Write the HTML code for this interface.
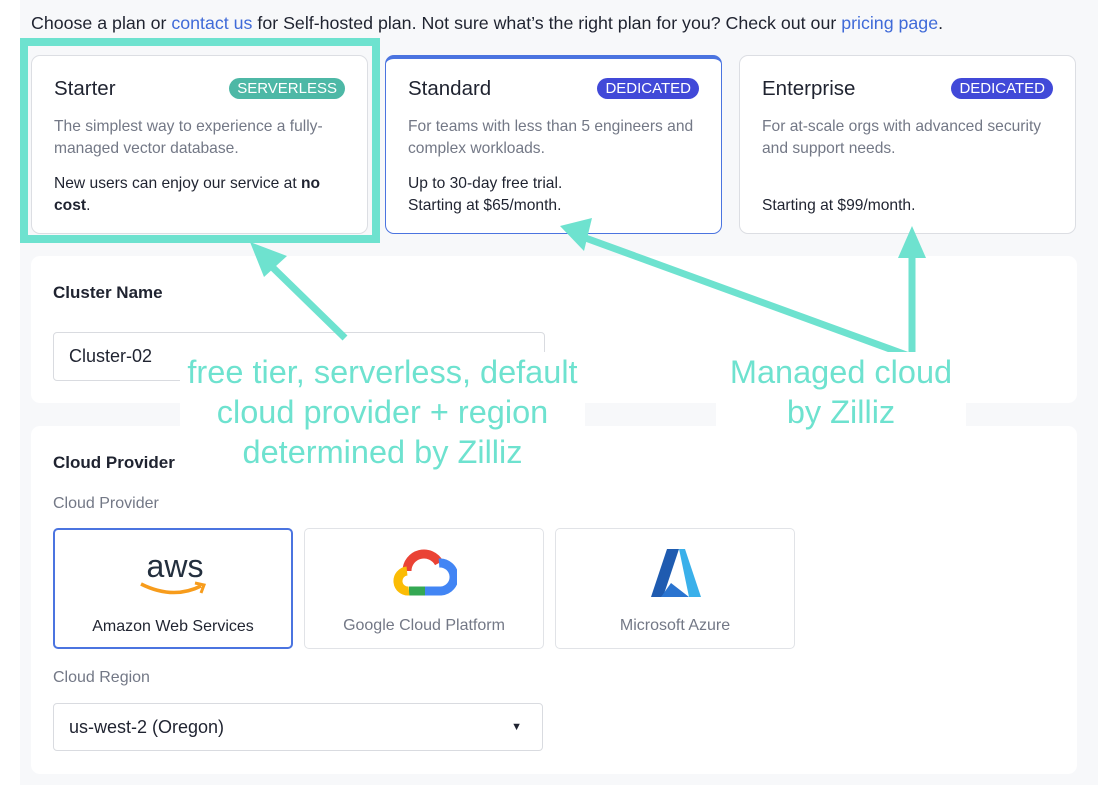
<!DOCTYPE html>
<html><head><meta charset="utf-8"><style>
*{box-sizing:border-box;margin:0;padding:0}
body{width:1098px;height:798px;background:#fff;font-family:"Liberation Sans",sans-serif;position:relative;overflow:hidden;color:#1f2330}
.bg{position:absolute;left:20px;top:0;width:1078px;height:785px;background:#f7f8fa}
.top{position:absolute;left:31px;top:13px;font-size:17.8px;color:#1f2330;white-space:nowrap}
.top a{color:#3f6ad8;text-decoration:none}
.card{position:absolute;top:55px;width:337px;height:179px;background:#fff;border:1.5px solid #dcdee3;border-radius:9px;padding:20px 22px}
.card h3{font-size:20.5px;font-weight:normal;color:#1f2330;margin-top:1px}
.badge{position:absolute;right:22px;top:22px;color:#fff;font-size:15px;padding:2px 8px;border-radius:12px}
.desc{margin-top:15px;font-size:15.6px;line-height:22px;color:#737886}
.note{font-size:15.6px;line-height:22px;color:#1f2330;position:absolute;left:22px;top:117px;right:18px}
.panel{position:absolute;left:31px;width:1046px;background:#fff;border-radius:9px}
.lbl{position:absolute;font-size:17px;font-weight:bold;color:#1f2330}
.sub{position:absolute;font-size:16px;color:#737886}
.input{position:absolute;border:1.5px solid #d9dbe0;border-radius:4px;font-size:18px;padding:0 15px;display:flex;align-items:center;background:#fff}
.prov{position:absolute;top:528px;width:240px;height:121px;border:1.5px solid #e1e3e7;border-radius:5px;background:#fff;text-align:center;font-size:16px;color:#737886}
.prov span{position:absolute;left:0;right:0;top:88px}
.ann{position:absolute;background:#fff;color:#6ee2cf;font-size:32.5px;text-align:center;line-height:40px;white-space:nowrap}
</style></head><body>
<div class="bg"></div>
<div class="top">Choose a plan or <a>contact us</a> for Self-hosted plan. Not sure what’s the right plan for you? Check out our <a>pricing page</a>.</div>

<div class="card" style="left:31px"><h3>Starter</h3><div class="badge" style="background:#4db8a6">SERVERLESS</div>
<div class="desc">The simplest way to experience a fully-managed vector database.</div>
<div class="note">New users can enjoy our service at <b>no cost</b>.</div></div>
<div class="card" style="left:385px;border:1.5px solid #4b74e0;border-top:4px solid #4b74e0;padding-top:17px"><h3>Standard</h3><div class="badge" style="background:#4149d8;top:19px">DEDICATED</div>
<div class="desc">For teams with less than 5 engineers and complex workloads.</div>
<div class="note" style="top:114px">Up to 30-day free trial.<br>Starting at $65/month.</div></div>
<div class="card" style="left:739px"><h3>Enterprise</h3><div class="badge" style="background:#4149d8">DEDICATED</div>
<div class="desc">For at-scale orgs with advanced security and support needs.</div>
<div class="note" style="top:139px">Starting at $99/month.</div></div>
<div style="position:absolute;left:20px;top:38px;width:360px;height:205px;border:8px solid #6ee2cf"></div>

<div class="panel" style="top:256px;height:147px"></div>
<div class="lbl" style="left:53px;top:283px">Cluster Name</div>
<div class="input" style="left:53px;top:332px;width:492px;height:49px">Cluster-02</div>

<div class="panel" style="top:426px;height:348px"></div>
<div class="lbl" style="left:53px;top:453px">Cloud Provider</div>
<div class="sub" style="left:53px;top:495px">Cloud Provider</div>
<div class="prov" style="left:53px;border:2px solid #4b74e0;color:#1f2330">
<svg width="80" height="50" viewBox="0 0 80 50" style="position:absolute;left:80px;top:18px">
<text x="40" y="29" text-anchor="middle" font-family="Liberation Sans" font-size="32" fill="#232f3e">aws</text>
<path d="M6 36 Q38 52 66 38" stroke="#f79c1c" stroke-width="3.5" fill="none"/><path d="M60 35 L69 37 L66 45" stroke="#f79c1c" stroke-width="3" fill="none"/></svg>
<span>Amazon Web Services</span></div>
<div class="prov" style="left:304px">
<svg width="64" height="50" viewBox="0 0 64 50" style="position:absolute;left:88px;top:18px">
<path d="M14 24 A17 17 0 0 1 46 16" stroke="#ea4335" stroke-width="9" fill="none"/>
<path d="M46 16 A13 13 0 0 1 48 44 L32 44" stroke="#4285f4" stroke-width="9" fill="none"/>
<path d="M32 44 L16 44" stroke="#34a853" stroke-width="9" fill="none"/>
<path d="M16 44 A10 10 0 0 1 14 24" stroke="#fbbc05" stroke-width="9" fill="none"/></svg>
<span>Google Cloud Platform</span></div>
<div class="prov" style="left:555px">
<svg width="54" height="52" viewBox="0 0 54 52" style="position:absolute;left:93px;top:18px">
<path d="M18 2 L30 2 L14 50 L2 50 Z" fill="#1f5bb0"/><path d="M30 2 L36 2 L52 50 L40 50 Z" fill="#3ab0ea"/><path d="M22 36 L40 50 L12 50 Z" fill="#2a74d0"/></svg>
<span>Microsoft Azure</span></div>
<div class="sub" style="left:53px;top:669px">Cloud Region</div>
<div class="input" style="left:53px;top:703px;width:490px;height:48px">us-west-2 (Oregon)<span style="position:absolute;right:20px;font-size:11px">▼</span></div>

<svg width="1098" height="798" style="position:absolute;left:0;top:0">
<g stroke="#6ee2cf" stroke-width="7" fill="#6ee2cf">
<line x1="345" y1="338" x2="265" y2="260"/>
<polygon points="250,242 287,256 264,277" stroke="none"/>
<line x1="912" y1="357" x2="580" y2="236"/>
<polygon points="560,226 592,218 584,251" stroke="none"/>
<line x1="912" y1="357" x2="912" y2="250"/>
<polygon points="912,226 898,258 926,258" stroke="none"/>
</g></svg>
<div class="ann" style="left:180px;top:352px;width:405px;height:118px">free tier, serverless, default<br>cloud provider + region<br>determined by Zilliz</div>
<div class="ann" style="left:716px;top:352px;width:250px;height:76px">Managed cloud<br>by Zilliz</div>
</body></html>
